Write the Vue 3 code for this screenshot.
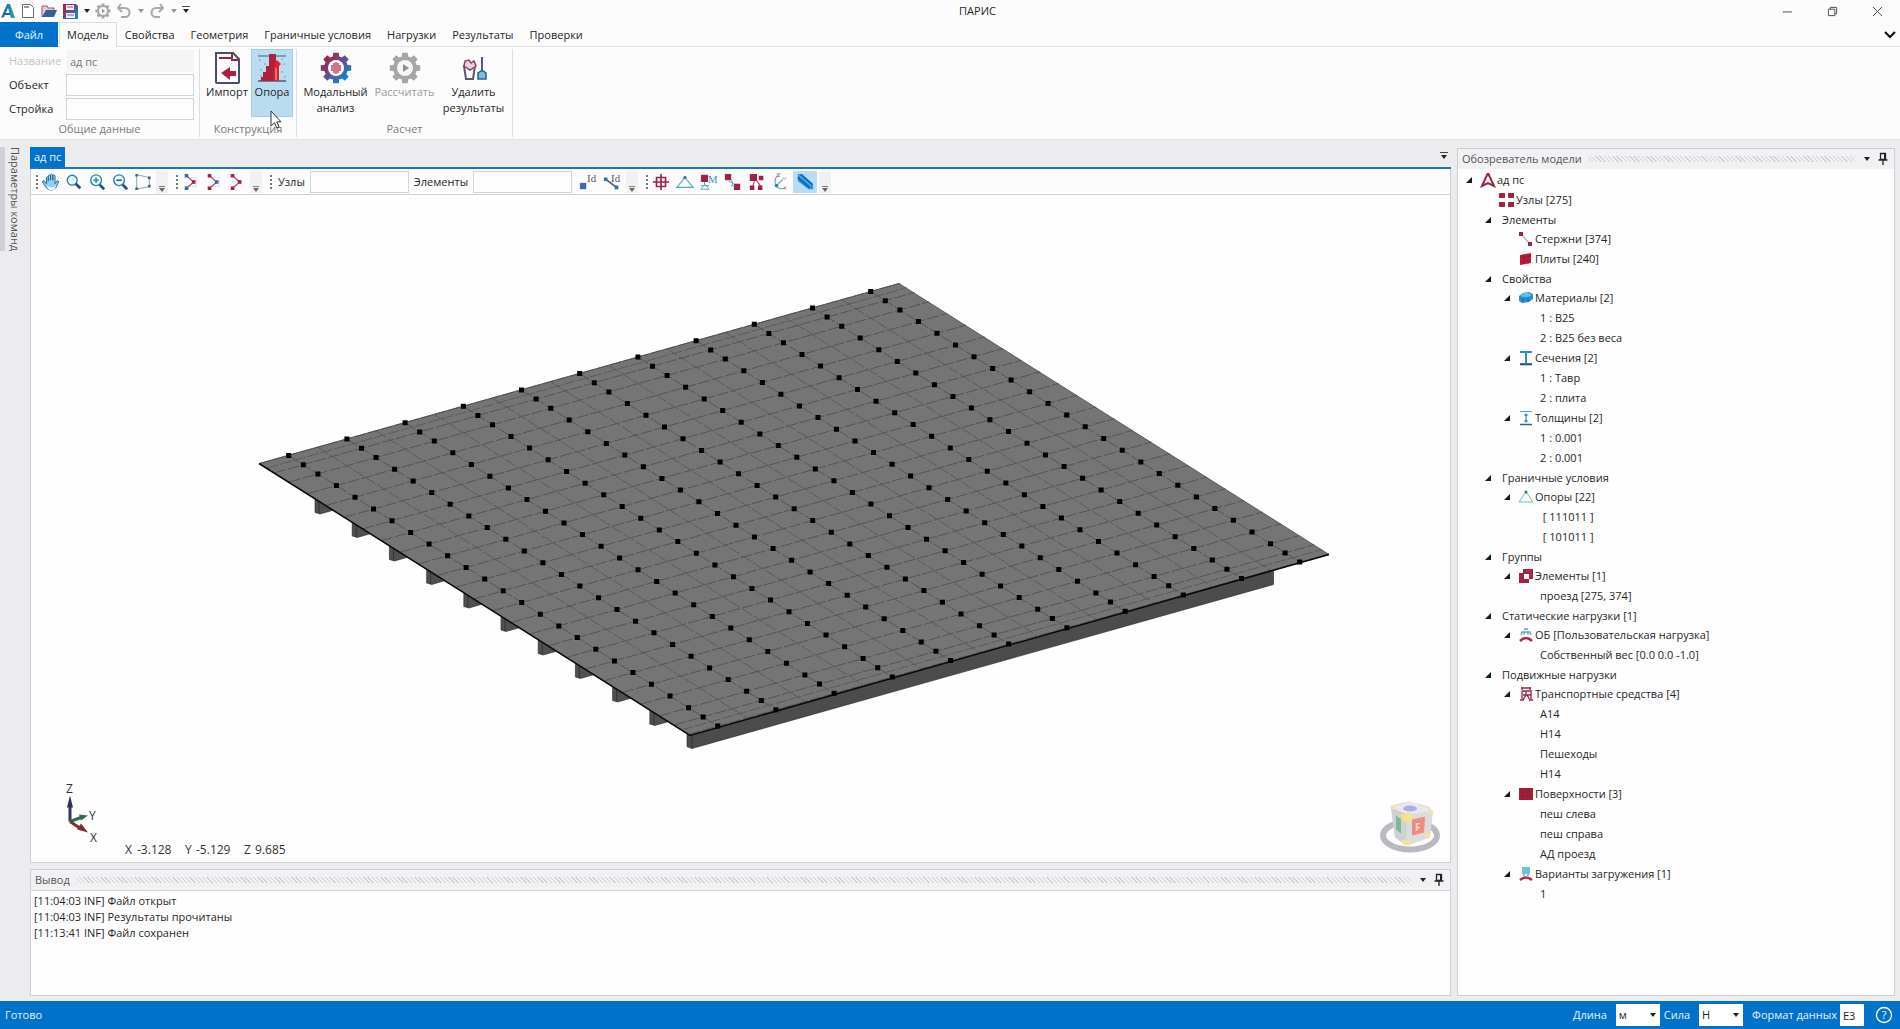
<template>
  <div class="app">
    <svg class="defs" width="0" height="0" aria-hidden="true">
      <defs>
        <linearGradient id="brand" x1="0" y1="0" x2="1" y2="1">
          <stop offset="0.2" stop-color="#a3244c" />
          <stop offset="0.8" stop-color="#1b7fc8" />
        </linearGradient>
        <linearGradient id="logo" x1="0" y1="0" x2="1" y2="0">
          <stop offset="0" stop-color="#1b5f9c" />
          <stop offset="1" stop-color="#27a3b8" />
        </linearGradient>
      </defs>
    </svg>

    <header class="titlebar">
      <div class="quick">
        <svg class="q-logo" viewBox="0 0 16 16" v-html="icons.logo"></svg>
        <button aria-label="Создать"><svg viewBox="0 0 16 16" v-html="icons.newFile"></svg></button>
        <button aria-label="Открыть"><svg viewBox="0 0 16 16" v-html="icons.open"></svg></button>
        <button aria-label="Сохранить"><svg viewBox="0 0 16 16" v-html="icons.save"></svg></button>
        <button class="narrow" aria-label="Варианты сохранения"><i class="caret"></i></button>
        <button aria-label="Расчет"><svg viewBox="0 0 32 32" v-html="icons.calcOff"></svg></button>
        <button aria-label="Отменить"><svg viewBox="0 0 16 16" v-html="icons.undo"></svg></button>
        <button class="narrow off" aria-label="Список отмены"><i class="caret"></i></button>
        <button aria-label="Повторить"><svg viewBox="0 0 16 16" v-html="icons.redo"></svg></button>
        <button class="narrow off" aria-label="Список повтора"><i class="caret"></i></button>
        <button class="narrow" aria-label="Настройка панели"><i class="caret bar"></i></button>
      </div>
      <h1>ПАРИС</h1>
      <div class="win">
        <button aria-label="Свернуть"><svg viewBox="0 0 12 12"><path d="M1 6.5h10" /></svg></button>
        <button aria-label="Восстановить"><svg viewBox="0 0 12 12"><path d="M1.500 3.500h7v7h-7zM3.500 3.500v-2h7v7h-2" /></svg></button>
        <button aria-label="Закрыть"><svg viewBox="0 0 12 12"><path d="M1 1l10 10M11 1L1 11" /></svg></button>
      </div>
    </header>

    <nav class="tabs">
      <button class="file">Файл</button>
      <button v-for="(t, i) in tabs" :key="t" :class="{ active: i === activeTab }" @click="activeTab = i">{{ t }}</button>
      <button class="collapse" aria-label="Свернуть ленту">
        <svg viewBox="0 0 12 12"><path d="M1 3l5 5 5-5" fill="none" stroke="#111" stroke-width="2.200" /></svg>
      </button>
    </nav>

    <section class="ribbon">
      <div class="group common">
        <div class="fields">
          <label for="f-name" class="off">Название</label><input id="f-name" value="ад пс" disabled>
          <label for="f-object">Объект</label><input id="f-object">
          <label for="f-build">Стройка</label><input id="f-build">
        </div>
        <div class="caption">Общие данные</div>
      </div>
      <div class="group">
        <div class="tools">
          <button class="tool import"><svg viewBox="0 0 32 32" v-html="icons.importFile"></svg>Импорт</button>
          <button class="tool pier hot">
            <svg viewBox="0 0 32 32" v-html="icons.pier"></svg>Опора
            <svg class="cursor" viewBox="0 0 12 19"><path d="M1 1v15l3.500-3.300 2.400 5.300 2.200-1-2.300-5.200H11z" fill="#fff" stroke="#333" /></svg>
          </button>
        </div>
        <div class="caption">Конструкция</div>
      </div>
      <div class="group last">
        <div class="tools">
          <button class="tool wide"><svg viewBox="0 0 32 32" v-html="icons.modal"></svg>Модальный анализ</button>
          <button class="tool wide off" disabled><svg viewBox="0 0 32 32" v-html="icons.calcOff"></svg>Рассчитать</button>
          <button class="tool wide"><svg viewBox="0 0 32 32" v-html="icons.clean"></svg>Удалить результаты</button>
        </div>
        <div class="caption">Расчет</div>
      </div>
    </section>

    <main class="work">
      <aside class="side"><button>Параметры команд</button></aside>

      <div class="center">
        <section class="doc">
          <div class="doc-tabs">
            <button class="doc-tab">ад пс</button>
            <button class="doc-list" aria-label="Список документов"><i class="caret bar"></i></button>
          </div>
          <div class="toolbar">
            <div class="bar-group">
              <i class="grip"></i>
              <button v-for="n in ['hand', 'lens', 'zoomIn', 'zoomOut', 'frame']" :key="n" :aria-label="n"><svg viewBox="0 0 20 20" v-html="icons[n]"></svg></button>
              <button class="overflow" aria-label="Еще"><i class="caret bar"></i></button>
            </div>
            <div class="bar-group">
              <i class="grip"></i>
              <button v-for="n in ['pickNodes', 'pickMid', 'pickAll']" :key="n" :aria-label="n"><svg viewBox="0 0 20 20" v-html="icons[n]"></svg></button>
              <button class="overflow" aria-label="Еще"><i class="caret bar"></i></button>
            </div>
            <div class="bar-group roomy">
              <i class="grip"></i>
              <label for="nodes">Узлы</label><input id="nodes">
              <label for="elements">Элементы</label><input id="elements">
              <button v-for="n in ['nodeId', 'elemId']" :key="n" :aria-label="n"><svg viewBox="0 0 20 20" v-html="icons[n]"></svg></button>
              <button class="overflow" aria-label="Еще"><i class="caret bar"></i></button>
            </div>
            <div class="bar-group roomy">
              <i class="grip"></i>
              <button v-for="n in ['target', 'support', 'mass', 'link', 'group4', 'axes', 'solid']" :key="n" :aria-label="n" :class="{ on: n === 'solid' }"><svg viewBox="0 0 20 20" v-html="icons[n]"></svg></button>
              <button class="overflow" aria-label="Еще"><i class="caret bar"></i></button>
            </div>
          </div>
          <svg class="scene" viewBox="31 196 1419 666" preserveAspectRatio="xMidYMid meet">
            <g stroke="#222" stroke-width="0.6">
              <path v-for="(d, i) in legs" :key="i" :d="d" fill="#505050" />
              <path d="M687 734V747l5 2L1273.500 585V570L690 735z" fill="#4c4c4c" />
              <path d="M692 736v13" fill="none" />
            </g>
            <path d="M259 464L899 284L1329 555L690 736z" fill="#757575" stroke="#4a4a4a" stroke-width="0.8" />
            <path :d="gridLines" class="mesh" />
            <path :d="midLines" class="mesh faint" />
            <path d="M259 464L690 736L1329 555" fill="none" stroke="#0a0a0a" stroke-width="1.500" />
            <path :d="nodePath" fill="#000" />

            <g stroke-width="3" fill="none">
              <path d="M70 822V806" stroke="#34346a" />
              <path d="M70 822l11-4" stroke="#2f6b46" />
              <path d="M70 822l9 6" stroke="#7a2f2c" />
            </g>
            <path d="M67 808l3-12 3 12z" fill="#2f2f60" />
            <path d="M88 816l-9-1 2 6z" fill="#2f6b46" />
            <path d="M88 833l-11-3 4-6z" fill="#7a2f2c" />
            <g class="scene-text">
              <text x="66" y="793">Z</text>
              <text x="89" y="820">Y</text>
              <text x="90" y="842">X</text>
              <text x="125" y="854">X</text><text x="137" y="854">-3.128</text>
              <text x="185" y="854">Y</text><text x="196" y="854">-5.129</text>
              <text x="244" y="854">Z</text><text x="255" y="854">9.685</text>
            </g>

            <ellipse cx="1410" cy="836" rx="27" ry="14" fill="none" stroke="#b9b9c2" stroke-width="6" />
            <path d="M1391 808l4-3 14-3 20 5 4 5-3 26-22 8-13-8z" fill="#dcdcdc" />
            <path d="M1391 808l16 7 26-4-22-9z" fill="#e9e9ea" />
            <path d="M1391 808l16 7-1 31-11-8z" fill="#cfd0d0" />
            <path d="M1396 816l5 4v14l-5-4z" fill="#7fb79a" />
            <path d="M1412 820l13-3-1 16-12 3z" fill="#ef8a80" />
            <path d="M1401 815l10-2 1 8-9 2z" fill="#f7e08a" />
            <path d="M1401 841l9-1v5l-6 1zM1426 833l5-1-1 6-5 1zM1390 807l4-2 2 4-4 1zM1428 810l5 1-1 4-4-1z" fill="#f3e3a2" />
            <ellipse cx="1410" cy="809" rx="7" ry="3" fill="#a9aee6" />
            <text x="1415" y="831" class="face">F</text>
          </svg>
        </section>

        <section class="panel output">
          <div class="panel-head">
            <h2>Вывод</h2><i class="hatch"></i>
            <button aria-label="Меню панели"><i class="caret"></i></button>
            <button aria-label="Закрепить"><svg viewBox="0 0 12 14" v-html="icons.pin"></svg></button>
          </div>
          <div class="log">
            <div v-for="line in log" :key="line">{{ line }}</div>
          </div>
        </section>
      </div>

      <section class="panel explorer">
        <div class="panel-head">
          <h2>Обозреватель модели</h2><i class="hatch"></i>
          <button aria-label="Меню панели"><i class="caret"></i></button>
          <button aria-label="Закрепить"><svg viewBox="0 0 12 14" v-html="icons.pin"></svg></button>
        </div>
        <ul class="tree">
          <li v-for="(row, i) in tree" :key="i" :class="['lvl' + row.lvl, { section: row.open && !row.icon }]">
            <button class="twist" v-if="row.open" aria-label="Свернуть"><svg viewBox="0 0 8 8"><path d="M7 1v6H1z" fill="#1a1a1a" /></svg></button>
            <span v-else class="twist"></span>
            <svg v-if="row.icon" class="tree-icon" viewBox="0 0 16 16" v-html="icons[row.icon]"></svg>
            <span :class="row.icon ? 'with-icon' : 'plain'">{{ row.text }}</span>
          </li>
        </ul>
      </section>
    </main>

    <footer class="status">
      <span class="ready">Готово</span>
      <label for="len">Длина</label>
      <span class="pick"><select id="len"><option>м</option></select></span>
      <label for="force">Сила</label>
      <span class="pick"><select id="force"><option>Н</option></select></span>
      <label for="format">Формат данных</label>
      <input id="format" value="E3">
      <button aria-label="Справка">
        <svg viewBox="0 0 18 18"><circle cx="9" cy="9" r="7.500" fill="none" stroke="#fff" stroke-width="1.300" /><text x="9" y="13" text-anchor="middle" class="q">?</text></svg>
      </button>
    </footer>
  </div>
</template>

<script setup>
import { ref } from 'vue'

const tabs = ['Модель', 'Свойства', 'Геометрия', 'Граничные условия', 'Нагрузки', 'Результаты', 'Проверки']
const activeTab = ref(0)

const log = [
  '[11:04:03 INF] Файл открыт',
  '[11:04:03 INF] Результаты прочитаны',
  '[11:13:41 INF] Файл сохранен'
]

const node = (lvl, text, icon, open = true) => ({ lvl, text, icon, open })
const leaf = (text) => node(3, text, null, false)

const tree = [
  node(0, 'ад пс', 'model'),
  node(1, 'Узлы [275]', 'nodes', false),
  node(1, 'Элементы'),
  node(2, 'Стержни [374]', 'bars', false),
  node(2, 'Плиты [240]', 'plates', false),
  node(1, 'Свойства'),
  node(2, 'Материалы [2]', 'material'),
  leaf('1 : B25'),
  leaf('2 : B25 без веса'),
  node(2, 'Сечения [2]', 'section'),
  leaf('1 : Тавр'),
  leaf('2 : плита'),
  node(2, 'Толщины [2]', 'thickness'),
  leaf('1 : 0.001'),
  leaf('2 : 0.001'),
  node(1, 'Граничные условия'),
  node(2, 'Опоры [22]', 'supports'),
  leaf(' [ 111011 ]'),
  leaf(' [ 101011 ]'),
  node(1, 'Группы'),
  node(2, 'Элементы [1]', 'groups'),
  leaf('проезд [275, 374]'),
  node(1, 'Статические нагрузки [1]'),
  node(2, 'ОБ [Пользовательская нагрузка]', 'load'),
  leaf('Собственный вес [0.0 0.0 -1.0]'),
  node(1, 'Подвижные нагрузки'),
  node(2, 'Транспортные средства [4]', 'vehicle'),
  leaf('А14'),
  leaf('Н14'),
  leaf('Пешеходы'),
  leaf('Н14'),
  node(2, 'Поверхности [3]', 'surface'),
  leaf('пеш слева'),
  leaf('пеш справа'),
  leaf('АД проезд'),
  node(2, 'Варианты загружения [1]', 'variant'),
  leaf('1')
]

// gear outline with 8 teeth in a 32x32 box
function gear(r1, r2) {
  const pts = []
  for (let i = 0; i < 8; i++) {
    const a = (i * Math.PI) / 4
    for (const [da, r] of [[-0.26, r1], [-0.18, r2], [0.18, r2], [0.26, r1]]) {
      pts.push((16 + r * Math.cos(a + da)).toFixed(1) + ' ' + (16 + r * Math.sin(a + da)).toFixed(1))
    }
  }
  return 'M' + pts.join('L') + 'z'
}

const red = '#9b2443'
const bend = (a, b, c) =>
  `<path d="M5 3l8 7-8 7" fill="none" stroke="#b2455c" stroke-width="1.300"/><path d="M3 1h4v4H3zM3 15h4v4H3z" fill="${a}"/><path d="M11 8h4v4h-4z" fill="${b}"/>${c}`

const icons = {
  logo: '<path d="M1 15L7 1h3l5 14h-4L8 5 4 14z" fill="url(#logo)"/><path d="M4 11h6" stroke="#1b5f9c" stroke-width="2"/>',
  newFile: '<path d="M2.500 1.500h8l3 3v10h-11z" fill="#fff" stroke="#6c6470"/><path d="M4 4h5" stroke="#8a6a80" stroke-width="1.500"/>',
  open: '<path d="M1 14V3h5l1 2h6v2" fill="#e4c9d4" stroke="#9a5470"/><path d="M1 14L5 7h11l-3 7z" fill="#34608f"/>',
  save: '<path d="M1 1h13l2 2v13H1z" fill="url(#brand)"/><path d="M4 2h8v5H4zM4 10h9v5H4z" fill="#f4eef4"/><path d="M5 12h7M5 4h6" stroke="#7b5f8c"/>',
  undo: '<path d="M5 1L2 5l4 4M2 5h7a4 4 0 0 1 0 9H5" fill="none" stroke="#a9a9a9" stroke-width="2"/>',
  redo: '<path d="M11 1l3 4-4 4M14 5H7a4 4 0 0 0 0 9h4" fill="none" stroke="#a9a9a9" stroke-width="2"/>',
  importFile: '<path d="M5 1h17l6 6v23a1 1 0 0 1-1 1H6a1 1 0 0 1-1-1z" fill="#fff" stroke="#4a4e66" stroke-width="2"/><path d="M8 6h12M21 1v7h7" fill="none" stroke="#8e2a45" stroke-width="2"/><path d="M10 21l9-6v4h6v5h-6v4z" fill="#b01f3f"/>',
  pier: '<path d="M2 4h28" stroke="#5b8fa8" stroke-width="1.500"/><path d="M2 29h28" stroke="#3a6480" stroke-width="1.500"/><path d="M3 8h2M8 12h2M4 18h2M27 12h2M25 20h2M28 25h2M4 24h2M25 7h2" stroke="#5fa9c6"/><path d="M13 2h7v8h3v4h-4v15H5v-4h2v-5h3v-6h3z" fill="#b01f3c"/><path d="M18 11l3-3 4 4-3 3z" fill="#e3202e"/><path d="M18 14h5v15h-5z" fill="#e3202e"/><path d="M20 16v12" stroke="#f2c9d0"/>',
  modal: `<path d="${gear(12, 15.5)}" fill="url(#brand)"/><circle cx="16" cy="16" r="8" fill="#fff"/><path d="M12 13v6M14 11v10M16 10v12M18 11v10M20 13v6" stroke="#b52a4c" stroke-width="1.300"/>`,
  calcOff: `<path d="${gear(12, 15.5)}" fill="#a6a6a6"/><circle cx="16" cy="16" r="8" fill="#f6f6f6"/><path d="M14 12l6 4-6 4z" fill="#8e8e8e"/>`,
  clean: '<path d="M6 14h11l-2 13H8z" fill="#fff" stroke="#5c5578" stroke-width="2"/><path d="M6 14l1-5 4-1 2 3 3-2 2 5-6 4z" fill="#e6d3de" stroke="#8c4368" stroke-width="1.500"/><path d="M24 5v15" stroke="#4d5b80" stroke-width="2"/><path d="M20 27v-6l3-2h2l3 2v6z" fill="#7fb9e0" stroke="#2b5f96" stroke-width="1.500"/>',
  hand: '<path d="M5 12V5q1-2 2 0v4V3q1-2 2.500 0v5-6q1-1.500 2.500 0v6-5q1-1.500 2.500 0v9l2-3q2-1 2 1l-3 6q-2 3-5 3-4 0-6-3l-4-6q0-2 2-1z" fill="#8fd0f2" stroke="#2c5f88"/><path d="M5 14q6 4 11 0l-3 5H8z" fill="#f4fbff"/>',
  lens: '<circle cx="8" cy="8" r="5.500" fill="#e2f6fc" stroke="#2b7fa8" stroke-width="1.500"/><path d="M12 12l5 5" stroke="#1d5580" stroke-width="3"/>',
  zoomIn: '<circle cx="9" cy="8" r="6" fill="#ecfafd" stroke="#2b7fa8" stroke-width="1.500"/><path d="M6 8h6M9 5v6" stroke="#2f8f86" stroke-width="1.800"/><path d="M13 13l5 5" stroke="#1d5580" stroke-width="3"/>',
  zoomOut: '<circle cx="9" cy="8" r="6" fill="#ecfafd" stroke="#2b7fa8" stroke-width="1.500"/><path d="M6 8h6" stroke="#2b5f88" stroke-width="1.800"/><path d="M13 13l5 5" stroke="#1d5580" stroke-width="3"/>',
  frame: '<path d="M3 2l14 3v10L3 18z" fill="none" stroke="#7fa596"/><path d="M1.500 1h3v3h-3zM1.500 16h3v3h-3zM15.500 4h3v3h-3zM15.500 13h3v3h-3z" fill="#3d6f7c"/>',
  pickNodes: bend('#2f6ba4', red, '<path d="M8 5h8v10H8" fill="none" stroke="#c9c3cf" stroke-dasharray="1 1"/>'),
  pickMid: bend(red, '#2f6ba4', '<path d="M8 5h8v10H8" fill="none" stroke="#c9c3cf" stroke-dasharray="1 1"/>'),
  pickAll: bend(red, red, ''),
  nodeId: '<path d="M1 11h7v7H1z" fill="#3f6aa5"/><text x="9" y="10" font-family="Liberation Serif, serif" font-size="12" fill="#555">Id</text>',
  elemId: '<path d="M3 7l12 9" stroke="#4d6488" stroke-width="2"/><path d="M1 5h4v4H1zM13 14h4v4h-4z" fill="#3f6aa5"/><text x="9" y="10" font-family="Liberation Serif, serif" font-size="12" fill="#555">Id</text>',
  target: `<path d="M10 1v18M1 10h18M5 5h10v10H5z" fill="none" stroke="${red}" stroke-width="1.800"/>`,
  support: '<path d="M10 5l9 11H1z" fill="none" stroke="#5ea9b8" stroke-width="1.300"/><circle cx="10" cy="5" r="1.800" fill="#2a6e94"/>',
  mass: `<path d="M1 2h8v8H1z" fill="${red}"/><text x="9" y="11" font-family="Liberation Serif, serif" font-size="12" fill="#3a92ab">M</text><path d="M5 10v3l-4 5h9l-4-5M1 14h9" fill="none" stroke="#4a9db8"/>`,
  link: `<path d="M1 1h7v7H1zM11 12h7v7h-7z" fill="${red}"/><path d="M5 9l6 3-3 2 4 1M8 7l2 5" fill="none" stroke="#58a4c2"/>`,
  group4: `<path d="M8 6l-3 10M8 6l7 10" fill="none" stroke="#a24b62" stroke-width="1.200"/><path d="M2 1h8v8H2zM12 3h5v5h-5zM2 14h5v5H2zM11 14h5v5h-5z" fill="${red}"/>`,
  axes: '<path d="M7 3Q2 5 4 13q3 6 10 4M5 14l7-7" fill="none" stroke="#7fa3b0" stroke-width="1.300"/><circle cx="5" cy="14" r="2" fill="#2a84a8"/><path d="M5 1h4L5 4h4M12 5l2 2 2-2M13 15l3 3M16 15l-3 3" fill="none" stroke="#a87f86"/>',
  solid: '<path d="M2 1h5l12 11v6h-5L2 9z" fill="#2492da"/><path d="M2 5l13 11M5 2l13 11" stroke="#115a98" stroke-width="1.500"/><path d="M3 2l14 12" stroke="#6cc3f2"/>',
  pin: '<path d="M3.500 1.500h5v6h-5zM1.500 8h9M6 8v5" fill="none" stroke="#222" stroke-width="1.300"/><path d="M7 2h2v6H7z" fill="#222"/>',
  model: `<path d="M2 14L7.500 2h1L14 14l-6-3z" fill="none" stroke="${red}" stroke-width="2"/>`,
  nodes: `<path d="M0 1h6v5H0zM9 1h6v5H9zM0 10h6v5H0zM9 10h6v5H9z" fill="${red}"/>`,
  bars: `<path d="M3 3l9 10" stroke="#a86a72"/><path d="M1 1h4v4H1zM10 11h4v4h-4z" fill="${red}"/>`,
  plates: '<path d="M2 4l11-2v10L2 14z" fill="#c01d30"/><path d="M2 7l11-2M2 11l11-2M6 3v10M10 3v10" stroke="#96162c" stroke-width="0.700"/>',
  material: '<path d="M1 6l4-3 6-1 4 2v5l-4 3-7 1-3-2z" fill="#2b8fcb"/><path d="M2 6l4-3h5l3 2-4 2H5z" fill="#5fc0ea"/><path d="M5 8v4M10 8v4" stroke="#176a9c"/>',
  section: '<path d="M2 1h12v2H9v10h5v2H2v-2h5V3H2z" fill="#2d8fbe"/><path d="M2 14.500h12" stroke="#1f4f78" stroke-width="1.500"/>',
  thickness: '<path d="M2 1.500h12" stroke="#5aa4bd"/><path d="M2 14.500h12" stroke="#34627c" stroke-width="1.500"/><path d="M8 4v8M6.500 5.500L8 4l1.500 1.500M6.500 10.500L8 12l1.500-1.500" fill="none" stroke="#2d8fbe" stroke-width="1.200"/>',
  supports: '<path d="M8 3l7 10H1z" fill="none" stroke="#6cc0bb"/><circle cx="8" cy="3" r="1.500" fill="#3c6c78"/>',
  groups: `<path d="M5 1h10v10H5zM1 5h10v10H1z" fill="${red}"/><path d="M6 6h5v5H6z" fill="#fff"/><path d="M8 3h5v6" fill="none" stroke="#d13149"/>`,
  load: '<path d="M2 14q6-6 12 0" fill="none" stroke="#ad2b42" stroke-width="2.500"/><path d="M3 8l1-3h8l1 3M6 5v3M10 5v3M6 2h4" fill="none" stroke="#55a9c0" stroke-width="1.300"/>',
  vehicle: `<path d="M3 2h10M4 5h9v8M4 5v8M2 14h4M11 14h4M5 9h8M8 5v4l-3 5M9 9l3 5M4 1v3M12 1v3" fill="none" stroke="${red}" stroke-width="1.300"/>`,
  surface: '<path d="M1 2h14v12H1z" fill="#a81c34"/><path d="M1 6h14M1 10h14M5 2v12M10 2v12" stroke="#841f48" stroke-width="0.700"/>',
  variant: '<path d="M2 14q6-5 12 0" fill="none" stroke="#ad2b42" stroke-width="2.500"/><path d="M4 1h8v7H4z" fill="#74bfd0"/><path d="M6 8v2M10 8v2" stroke="#55a9c0" stroke-width="1.500"/>'
}

// plate mesh: 11 girder lines, 25 nodes along each of them
const along = (() => {
  const steps = [0]
  for (let i = 0; i < 24; i++) {
    const small = i < 2 || i > 21
    steps.push(steps[i] + (small ? 14.6 : 18.53))
  }
  return steps
})()
const slope = 270.6 / 429
const pos = (col, s) => [288.7 + 58.2 * col + s, 456 - 16.4 * col + s * slope]
const fmt = ([x, y]) => x.toFixed(1) + ' ' + y.toFixed(1)
const line = (a, b) => 'M' + fmt(a) + 'L' + fmt(b)

let gridLines = ''
let midLines = ''
let nodePath = ''
for (const s of along) {
  gridLines += line(pos(-0.5, s), pos(10.5, s))
  for (let c = 0; c < 11; c++) {
    const [x, y] = pos(c, s)
    nodePath += `M${(x - 2.5).toFixed(1)} ${(y - 2.5).toFixed(1)}h5v5h-5z`
  }
}
for (let c = 0; c < 11; c++) {
  gridLines += line(pos(c, 0), pos(c, along[24]))
  if (c < 10) midLines += line(pos(c + 0.5, 0), pos(c + 0.5, along[24]))
}
midLines += line(pos(-0.5, 7), pos(10.5, 7)) + line(pos(-0.5, along[24] - 7), pos(10.5, along[24] - 7))

const legs = []
for (let i = 0; i < 10; i++) {
  const x = 315 + i * 37.2
  const y = 498 + i * 23.5
  legs.push(`M${x} ${y}v15l5 1.500 14-4V${y + 10}zM${x + 4} ${y}v16`)
}
</script>

<style>
body {
  margin: 0;
}
</style>

<style scoped>
.app {
  min-height: 100vh;
  display: flex;
  flex-direction: column;
  background: #ececef;
  color: #262626;
  font-family: "Open Sans", "Noto Sans", sans-serif;
  font-size: 11px;
  line-height: 16px;
}
.defs {
  position: absolute;
}
button {
  font: inherit;
  color: inherit;
  background: none;
  border: none;
  padding: 0;
  margin: 0;
}
input,
select {
  font: inherit;
  color: inherit;
  box-sizing: border-box;
  border: 1px solid #d4d4d8;
  background: #fdfdfd;
  padding: 0 3px;
  margin: 0;
  border-radius: 0;
}
h1,
h2 {
  font-size: 11px;
  font-weight: 400;
  margin: 0;
}
svg {
  display: block;
}
.caret {
  display: block;
  width: 0;
  border: 3px solid transparent;
  border-top: 4px solid #222;
  border-bottom: 0;
  margin: 0 auto;
  position: relative;
}
.caret.bar::before {
  content: "";
  position: absolute;
  left: -4px;
  top: -7px;
  width: 8px;
  height: 1px;
  background: #444;
}
.off .caret {
  border-top-color: #999;
}

/* title bar */
.titlebar {
  display: flex;
  align-items: center;
  height: 22px;
  background: #fcfcfc;
}
.titlebar h1 {
  flex: 1;
  text-align: center;
}
.quick {
  display: flex;
  align-items: center;
  gap: 3px;
}
.quick svg {
  width: 16px;
  height: 16px;
}
.quick button {
  width: 18px;
  display: flex;
  justify-content: center;
}
.quick .narrow {
  width: 9px;
}
.win {
  display: flex;
}
.win button {
  width: 45px;
  height: 22px;
  display: flex;
  align-items: center;
  justify-content: center;
}
.win svg {
  width: 11px;
  height: 11px;
  fill: none;
  stroke: #444;
}

/* ribbon */
.tabs {
  display: flex;
  height: 24px;
  background: #fcfcfc;
  border-bottom: 1px solid #e0e0e4;
}
.tabs button {
  padding: 0 7px;
  height: 25px;
  border: 1px solid transparent;
  border-bottom: none;
}
.tabs .file {
  width: 58px;
  background: #0072ca;
  color: #e8f4ff;
  margin-right: 1px;
}
.tabs .active {
  border-color: #dcdce0;
  background: #fcfcfc;
}
.tabs .collapse {
  margin-left: auto;
  padding: 0 3px;
}
.collapse svg {
  width: 12px;
  height: 12px;
}
.ribbon {
  display: flex;
  background: #fcfcfc;
  padding: 2px 0;
  border-bottom: 1px solid #e4e4e8;
}
.group {
  display: flex;
  flex-direction: column;
  border-right: 1px solid #dedee2;
  padding: 0 3px;
}
.group.last {
  padding: 0 4px;
}
.fields {
  display: grid;
  grid-template-columns: 57px 128px;
  grid-auto-rows: 24px;
  align-items: center;
  padding: 0 2px 0 6px;
}
.fields input {
  height: 22px;
}
.fields input:disabled {
  border-color: transparent;
  background: #f5f5f5;
  color: #777;
}
.fields .off {
  color: #c4c4c4;
}
.caption {
  text-align: center;
  color: #7a7a7a;
  height: 16px;
}
.tools {
  display: flex;
  height: 72px;
}
.tool {
  position: relative;
  height: 68px;
  width: 48px;
  padding-top: 3px;
  display: flex;
  flex-direction: column;
  align-items: center;
}
.tool > svg {
  width: 32px;
  height: 32px;
}
.tool.pier {
  width: 42px;
}
.tool.wide {
  width: 69px;
}
.tool.hot {
  background: #b9dcf0;
  box-shadow: inset 0 0 0 1px #a5cbe2;
}
.tool.off {
  color: #9a9a9a;
}
.tool > .cursor {
  position: absolute;
  left: 19px;
  top: 61px;
  width: 12px;
  height: 19px;
}

/* work area */
.work {
  flex: 1;
  display: flex;
  padding: 7px 5px 5px 0;
}
.side {
  width: 30px;
}
.side button {
  writing-mode: vertical-rl;
  border-left: 5px solid #d0d0d8;
  padding-left: 2px;
  color: #555;
}
.center {
  flex: 1;
  min-width: 0;
  display: flex;
  flex-direction: column;
  gap: 6px;
}
.doc {
  flex: 1;
  min-height: 0;
  display: flex;
  flex-direction: column;
}
.doc-tabs {
  display: flex;
  height: 20px;
  justify-content: space-between;
  border-bottom: 2px solid #1c74bb;
}
.doc-tab {
  background: #0072ca;
  color: #eaf5ff;
  padding: 0 4px;
}
.doc-list {
  width: 14px;
}
.toolbar {
  display: flex;
  gap: 6px;
  height: 26px;
  padding-left: 3px;
  background: #fcfcfc;
  border: 1px solid #d0d0d4;
  border-top: none;
  box-sizing: border-box;
}
.bar-group {
  display: flex;
  align-items: center;
}
.grip {
  width: 2px;
  height: 14px;
  margin: 0 1px 0 2px;
  background: repeating-linear-gradient(#777 0 2px, transparent 2px 4px);
}
.bar-group button {
  width: 23px;
  height: 22px;
  display: flex;
  align-items: center;
  justify-content: center;
}
.roomy button {
  width: 24px;
}
.bar-group svg {
  width: 18px;
  height: 18px;
}
.bar-group .on {
  background: #bcdcf2;
}
.bar-group .overflow {
  width: 12px;
  margin-left: 2px;
  background: #f1f1f4;
  align-items: flex-end;
  padding-bottom: 1px;
}
.overflow .caret {
  border-top-color: #666;
}
.overflow .caret.bar::before {
  left: -3px;
  top: -6px;
  width: 6px;
  background: #777;
}
.bar-group label {
  padding: 0 5px;
}
.bar-group input {
  width: 99px;
  height: 22px;
}
.bar-group input:last-of-type {
  margin-right: 4px;
}
.scene {
  flex: 1 1 600px;
  width: 100%;
  min-height: 0;
  background: #fefefe;
  border: 1px solid #d0d0d4;
  border-top: none;
  box-sizing: border-box;
}
.mesh {
  fill: none;
  stroke: #4c4c46;
  stroke-width: 0.8;
  stroke-dasharray: 12 2;
}
.mesh.faint {
  stroke: #55554e;
}
.scene-text {
  font-size: 12px;
  fill: #333;
}
.face {
  font-size: 10px;
  font-weight: 700;
  fill: #fbe3df;
}

/* dock panels */
.panel {
  border: 1px solid #cfcfd6;
  display: flex;
  flex-direction: column;
}
.panel-head {
  display: flex;
  align-items: center;
  height: 20px;
  padding: 0 3px 0 4px;
  color: #555;
  background: #f1f1f3;
}
.panel-head button {
  width: 16px;
}
.panel-head svg {
  width: 12px;
  height: 14px;
  margin: 0 auto;
}
.hatch {
  flex: 1;
  height: 6px;
  margin: 0 4px 0 6px;
  background: repeating-linear-gradient(45deg, #d2d2d6 0 1px, transparent 1px 3px);
}
.output {
  height: 125px;
}
.log {
  flex: 1;
  padding: 2px 3px;
  background: #fefefe;
  border-top: 1px solid #d8d8dc;
}
.explorer {
  width: 436px;
  margin-left: 6px;
  margin-top: 1px;
}
.tree {
  flex: 1;
  list-style: none;
  margin: 0;
  padding: 1px 0 0 2px;
  background: #fefefe;
}
.tree li {
  display: flex;
  align-items: center;
  height: 20px;
  white-space: pre;
}
.tree .section {
  height: 19px;
}
.lvl1 {
  margin-left: 19px;
}
.lvl2 {
  margin-left: 38px;
}
.lvl3 {
  margin-left: 57px;
}
.twist {
  width: 18px;
}
.twist svg {
  width: 8px;
  height: 8px;
  margin: 0 auto;
}
.tree-icon {
  width: 16px;
  height: 16px;
  margin-left: 2px;
}
.with-icon {
  padding-left: 1px;
}
.plain {
  padding-left: 5px;
}

/* status bar */
.status {
  display: flex;
  align-items: center;
  height: 28px;
  padding: 0 7px 0 5px;
  background: #0072ca;
  color: #e6f3ff;
}
.ready {
  flex: 1;
}
.status select,
.status input {
  height: 22px;
  color: #222;
  border: none;
  background: #fff;
}
.pick {
  position: relative;
  margin: 0 4px 0 9px;
}
.pick select {
  appearance: none;
  width: 44px;
}
.pick::after {
  content: "";
  position: absolute;
  right: 4px;
  top: 9px;
  border: 3px solid transparent;
  border-top: 4px solid #222;
  border-bottom: 0;
  pointer-events: none;
}
.status input {
  width: 24px;
  margin: 0 11px 0 3px;
}
.status label[for="format"] {
  margin-left: 5px;
}
.status svg {
  width: 18px;
  height: 18px;
}
.q {
  font-size: 11px;
  fill: #fff;
}
</style>
